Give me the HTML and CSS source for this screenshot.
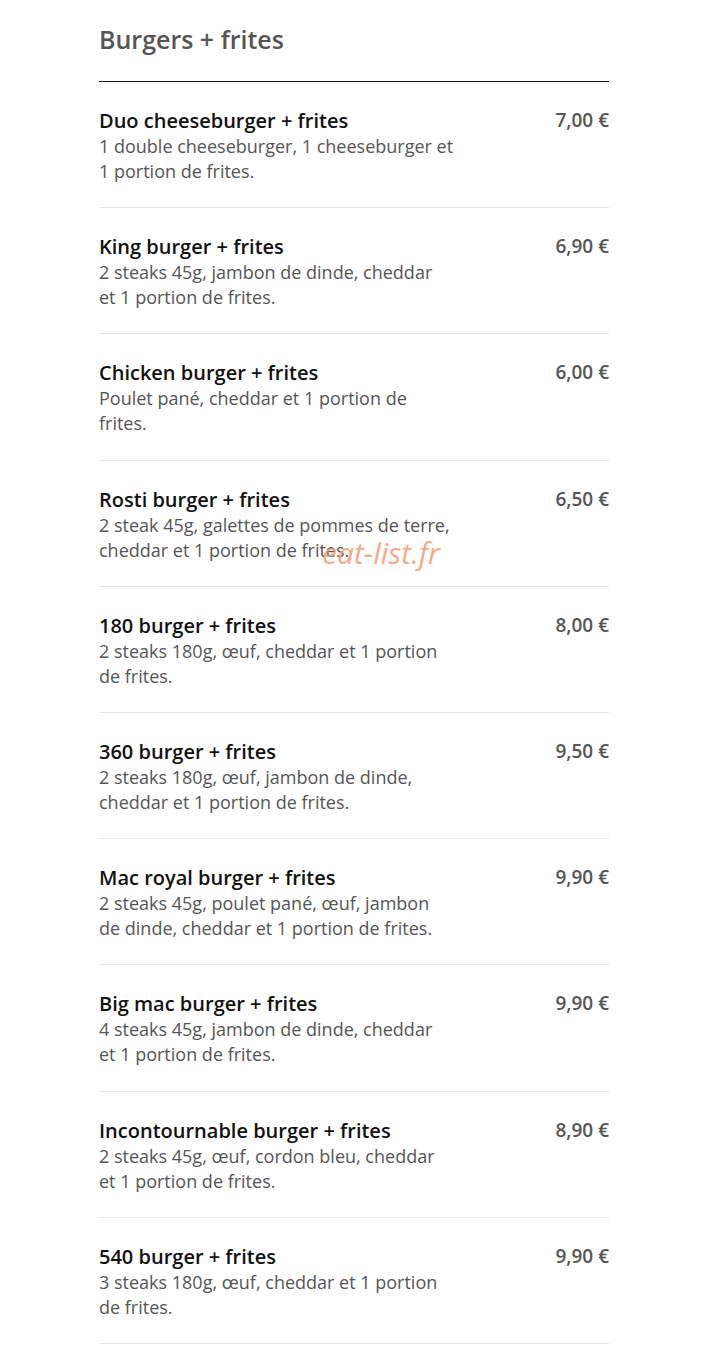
FILE: index.html
```html
<!DOCTYPE html>
<html lang="fr">
<head>
<meta charset="UTF-8">
<meta name="viewport" content="width=device-width, initial-scale=1.0">
<title>Burgers + frites</title>
<link rel="stylesheet" href="styles.css">
</head>
<body>

<div class="menu-section">
    <h2 class="section-title">Burgers + frites</h2>

    <div class="menu-item">
        <div class="item-info">
            <h3 class="item-name">Duo cheeseburger + frites</h3>
            <p class="item-desc">1 double cheeseburger, 1 cheeseburger et<br>1 portion de frites.</p>
        </div>
        <span class="item-price">7,00 €</span>
    </div>

    <div class="menu-item">
        <div class="item-info">
            <h3 class="item-name">King burger + frites</h3>
            <p class="item-desc">2 steaks 45g, jambon de dinde, cheddar<br>et 1 portion de frites.</p>
        </div>
        <span class="item-price">6,90 €</span>
    </div>

    <div class="menu-item">
        <div class="item-info">
            <h3 class="item-name">Chicken burger + frites</h3>
            <p class="item-desc">Poulet pané, cheddar et 1 portion de<br>frites.</p>
        </div>
        <span class="item-price">6,00 €</span>
    </div>

    <div class="menu-item">
        <div class="item-info">
            <h3 class="item-name">Rosti burger + frites</h3>
            <p class="item-desc">2 steak 45g, galettes de pommes de terre,<br>cheddar et 1 portion de frites.</p>
        </div>
        <span class="item-price">6,50 €</span>
        <span class="watermark">eat-list.fr</span>
    </div>

    <div class="menu-item">
        <div class="item-info">
            <h3 class="item-name">180 burger + frites</h3>
            <p class="item-desc">2 steaks 180g, œuf, cheddar et 1 portion<br>de frites.</p>
        </div>
        <span class="item-price">8,00 €</span>
    </div>

    <div class="menu-item">
        <div class="item-info">
            <h3 class="item-name">360 burger + frites</h3>
            <p class="item-desc">2 steaks 180g, œuf, jambon de dinde,<br>cheddar et 1 portion de frites.</p>
        </div>
        <span class="item-price">9,50 €</span>
    </div>

    <div class="menu-item">
        <div class="item-info">
            <h3 class="item-name">Mac royal burger + frites</h3>
            <p class="item-desc">2 steaks 45g, poulet pané, œuf, jambon<br>de dinde, cheddar et 1 portion de frites.</p>
        </div>
        <span class="item-price">9,90 €</span>
    </div>

    <div class="menu-item">
        <div class="item-info">
            <h3 class="item-name">Big mac burger + frites</h3>
            <p class="item-desc">4 steaks 45g, jambon de dinde, cheddar<br>et 1 portion de frites.</p>
        </div>
        <span class="item-price">9,90 €</span>
    </div>

    <div class="menu-item">
        <div class="item-info">
            <h3 class="item-name">Incontournable burger + frites</h3>
            <p class="item-desc">2 steaks 45g, œuf, cordon bleu, cheddar<br>et 1 portion de frites.</p>
        </div>
        <span class="item-price">8,90 €</span>
    </div>

    <div class="menu-item">
        <div class="item-info">
            <h3 class="item-name">540 burger + frites</h3>
            <p class="item-desc">3 steaks 180g, œuf, cheddar et 1 portion<br>de frites.</p>
        </div>
        <span class="item-price">9,90 €</span>
    </div>
</div>

</body>
</html>
```

FILE: styles.css
```css
body {
    margin: 0;
    background: #fff;
    font-family: "Open Sans", "Liberation Sans", sans-serif;
}

.menu-section {
    width: 510px;
    margin-left: 99px;
    padding-top: 22px;
}

.section-title {
    margin: 0;
    padding-bottom: 25px;
    font-size: 25px;
    line-height: 34px;
    font-weight: 600;
    color: #555;
    border-bottom: 1px solid #111;
}

.menu-item {
    position: relative;
    display: flex;
    justify-content: space-between;
    align-items: flex-start;
    padding: 25px 0 23.2px;
    border-bottom: 1px solid #e6e6e6;
}

.item-info {
    width: 380px;
}

.item-name {
    margin: 0;
    font-size: 20px;
    line-height: 27px;
    font-weight: 600;
    color: #111;
}

.item-desc {
    margin: 0;
    font-size: 18px;
    line-height: 25px;
    color: #555;
}

.item-price {
    font-size: 19px;
    line-height: 27px;
    font-weight: 600;
    color: #555;
}

.watermark {
    position: absolute;
    left: 223px;
    top: 71px;
    font-size: 30px;
    font-style: italic;
    color: #f4a27c;
    opacity: 0.9;
}
```
